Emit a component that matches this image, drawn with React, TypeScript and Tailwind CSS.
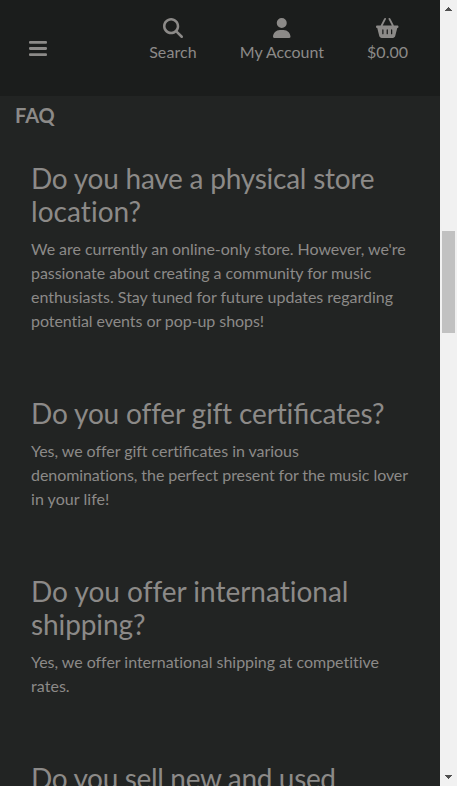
import { FaMagnifyingGlass, FaUser, FaBasketShopping } from "react-icons/fa6";

type Line = { text: string; tracking: string };

const faqs: { question: Line[]; answer: Line[] }[] = [
  {
    question: [
      { text: "Do you have a physical store", tracking: "tracking-[-0.235px]" },
      { text: "location?", tracking: "tracking-[0.05px]" },
    ],
    answer: [
      { text: "We are currently an online-only store. However, we're", tracking: "tracking-[-0.035px]" },
      { text: "passionate about creating a community for music", tracking: "tracking-[-0.05px]" },
      { text: "enthusiasts. Stay tuned for future updates regarding", tracking: "tracking-[-0.015px]" },
      { text: "potential events or pop-up shops!", tracking: "tracking-[-0.07px]" },
    ],
  },
  {
    question: [{ text: "Do you offer gift certificates?", tracking: "tracking-[-0.15px]" }],
    answer: [
      { text: "Yes, we offer gift certificates in various", tracking: "tracking-[-0.05px]" },
      { text: "denominations, the perfect present for the music lover", tracking: "tracking-[-0.07px]" },
      { text: "in your life!", tracking: "tracking-[0.05px]" },
    ],
  },
  {
    question: [
      { text: "Do you offer international", tracking: "tracking-[-0.01px]" },
      { text: "shipping?", tracking: "tracking-[-0.1px]" },
    ],
    answer: [
      { text: "Yes, we offer international shipping at competitive", tracking: "tracking-[-0.04px]" },
      { text: "rates.", tracking: "tracking-[0.05px]" },
    ],
  },
  {
    question: [{ text: "Do you sell new and used", tracking: "tracking-[-0.34px]" }],
    answer: [],
  },
];

// Letter spacing switches ligatures off, so each "fi" pair resets it.
function Lines({ lines }: { lines: Line[] }) {
  return (
    <>
      {lines.map((line) => (
        <span key={line.text} className={`block whitespace-nowrap ${line.tracking}`}>
          {line.text.split(/(fi)/).map((part, i) =>
            part === "fi" ? (
              <span key={i} className="tracking-normal">
                {part}
              </span>
            ) : (
              part
            ),
          )}
        </span>
      ))}
    </>
  );
}

function Header() {
  return (
    <header className="flex h-24 shrink-0 items-start bg-[#1b1d1c] pr-[32px] pl-[29px]">
      <button className="mt-[41px]" aria-label="Menu">
        <svg className="h-[15px] w-[18px]" viewBox="0 0 18 15" fill="currentColor">
          <rect y="0" width="18" height="2.8" rx="1.1" />
          <rect y="6.1" width="18" height="2.8" rx="1.1" />
          <rect y="12.2" width="18" height="2.8" rx="1.1" />
        </svg>
      </button>
      <nav className="ml-auto flex gap-[43px] pt-[18px] text-base leading-6">
        <a className="flex flex-col items-center tracking-[0.1px]">
          <FaMagnifyingGlass className="mb-[2px] size-5" />
          Search
        </a>
        <a className="flex flex-col items-center">
          <FaUser className="mb-[2px] h-5 w-[17.5px]" />
          My Account
        </a>
        <a className="flex flex-col items-center">
          <FaBasketShopping className="mb-[2px] h-5 w-[22.5px]" />
          $0.00
        </a>
      </nav>
    </header>
  );
}

function Scrollbar() {
  return (
    <div className="flex h-full w-[17px] shrink-0 flex-col items-center bg-[#f1f1f1]">
      <svg className="h-[17px] w-[17px] shrink-0" viewBox="0 0 17 17" shapeRendering="crispEdges" fill="#505050">
        <path d="M8 7h1v1h1v1h1v1h1v1H5v-1h1V9h1V8h1z" />
      </svg>
      <div className="mt-[214px] h-[102px] w-[13px] bg-[#c1c1c1]" />
      <svg className="mt-auto h-[17px] w-[17px] shrink-0" viewBox="0 0 17 17" shapeRendering="crispEdges" fill="#505050">
        <path d="M5 6h7v1h-1v1h-1v1H9v1H8V9H7V8H6V7H5z" />
      </svg>
    </div>
  );
}

export default function App() {
  return (
    <div className="flex h-[786px] w-[457px] overflow-hidden bg-[#222423] font-[Lato,sans-serif] text-[#8c8a88]">
      <div className="flex h-full min-w-0 flex-1 flex-col overflow-hidden">
        <Header />
        <main className="min-h-0 flex-1 overflow-hidden">
          <h2 className="pt-[7px] pl-[15px] text-xl leading-6 font-bold">FAQ</h2>
          <div className="pt-[34.8px] pr-[31px] pl-[31px]">
            {faqs.map((faq) => (
              <section key={faq.question[0].text} className="pb-16">
                <h3 className="mb-2 text-[28px] leading-[33.6px]">
                  <Lines lines={faq.question} />
                </h3>
                <p className="text-base leading-6">
                  <Lines lines={faq.answer} />
                </p>
              </section>
            ))}
          </div>
        </main>
      </div>
      <Scrollbar />
    </div>
  );
}
